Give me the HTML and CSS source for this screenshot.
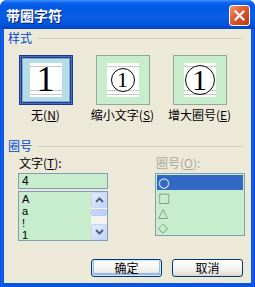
FILE: index.html
```html
<!DOCTYPE html>
<html lang="zh-CN">
<head>
    <meta charset="UTF-8">
    <title>带圈字符</title>
    <link rel="stylesheet" href="styles.css">
</head>
<body>

<div class="window">
    <div class="titlebar">
        <span class="title">带圈字符</span>
        <button class="close">
            <svg width="11" height="11" viewBox="0 0 11 11"><path d="M1.5 1.5 L9.5 9.5 M9.5 1.5 L1.5 9.5" stroke="#fff" stroke-width="2.2" stroke-linecap="square"/></svg>
        </button>
    </div>

    <div class="client">
        <div class="group-head">
            <span class="group-name">样式</span>
            <span class="group-line"></span>
        </div>

        <div class="styles">
            <div class="style-opt">
                <div class="preview selected">
                    <div class="paper"><span class="char-plain">1</span></div>
                </div>
                <div class="opt-label">无(<u>N</u>)</div>
            </div>
            <div class="style-opt">
                <div class="preview">
                    <div class="paper"><span class="ring ring-small">1</span></div>
                </div>
                <div class="opt-label">缩小文字(<u>S</u>)</div>
            </div>
            <div class="style-opt">
                <div class="preview">
                    <div class="paper"><span class="ring ring-big">1</span></div>
                </div>
                <div class="opt-label">增大圈号(<u>E</u>)</div>
            </div>
        </div>

        <div class="group-head second">
            <span class="group-name">圈号</span>
            <span class="group-line"></span>
        </div>

        <div class="fields">
            <div class="field">
                <div class="field-label">文字(<u>T</u>):</div>
                <div class="text-input">4</div>
                <div class="list text-list">
                    <div class="list-items">
                        <div class="item">A</div>
                        <div class="item">a</div>
                        <div class="item">!</div>
                        <div class="item">1</div>
                    </div>
                    <div class="scrollbar">
                        <div class="sb-btn">
                            <svg width="9" height="6" viewBox="0 0 9 6"><path d="M1 5 L4.5 1.5 L8 5" fill="none" stroke="#4d6185" stroke-width="2"/></svg>
                        </div>
                        <div class="sb-track"><div class="sb-thumb"></div></div>
                        <div class="sb-btn">
                            <svg width="9" height="6" viewBox="0 0 9 6"><path d="M1 1 L4.5 4.5 L8 1" fill="none" stroke="#4d6185" stroke-width="2"/></svg>
                        </div>
                    </div>
                </div>
            </div>

            <div class="field ring-field">
                <div class="field-label disabled">圈号(<u>O</u>):</div>
                <div class="list ring-list">
                    <div class="ring-item selected">○</div>
                    <div class="ring-item">□</div>
                    <div class="ring-item">△</div>
                    <div class="ring-item">◇</div>
                </div>
            </div>
        </div>

        <div class="buttons">
            <button class="btn default">确定</button>
            <button class="btn">取消</button>
        </div>
    </div>
</div>

</body>
</html>
```

FILE: styles.css
```css
body {
    margin: 0;
    padding: 0;
    font-family: "Noto Sans CJK SC", "Noto Sans", sans-serif;
    font-size: 12px;
    color: #000;
    background-color: #fff;
}

.window {
    width: 255px;
    height: 287px;
    display: flex;
    flex-direction: column;
    background: linear-gradient(to right, #0831d9 0, #166aee 1px, #0855dd 3px, #0855dd 252px, #166aee 253px, #0831d9 255px);
    border-radius: 7px 7px 0 0;
    overflow: hidden;
}

.titlebar {
    height: 29px;
    flex-shrink: 0;
    display: flex;
    align-items: center;
    justify-content: space-between;
    padding: 0 5px 0 6px;
    background: linear-gradient(#3d8fff 0, #0b61ec 3px, #0058e6 7px, #0a5fe0 16px, #0055db 24px, #0044c8 29px);
}

.title {
    color: #fff;
    font-weight: bold;
    font-size: 14px;
    text-shadow: 1px 1px 0 #0a1e7c;
    margin-top: 1px;
}

.close {
    width: 21px;
    height: 21px;
    padding: 0;
    margin-top: 2px;
    border: 1px solid #fff;
    border-radius: 3px;
    background: linear-gradient(135deg, #f09a78 0, #e3643c 35%, #cf4620 70%, #b83a1a 100%);
    display: flex;
    align-items: center;
    justify-content: center;
}

.client {
    flex: 1;
    margin: 0 4px 4px 4px;
    padding: 2px 8px 0 4px;
    background-color: #ece9d8;
}

.group-head {
    display: flex;
    align-items: center;
    height: 14px;
    gap: 6px;
}

.group-head.second {
    margin-top: 17px;
}

.group-name {
    color: #0046d5;
    line-height: 14px;
}

.group-line {
    flex: 1;
    height: 1px;
    background-color: #d0d0bf;
    margin-top: 1px;
}

.styles {
    display: flex;
    margin-top: 10px;
    margin-left: -1px;
}

.style-opt {
    width: 77px;
    display: flex;
    flex-direction: column;
    align-items: center;
}

.preview {
    width: 54px;
    height: 50px;
    box-sizing: border-box;
    border: 1px solid #93a89a;
    background-color: #c7edcc;
    display: flex;
    align-items: center;
    justify-content: center;
}

.preview.selected {
    border: 1px solid #1a3a8a;
    background-color: #b6dde6;
    box-shadow: inset 0 0 0 1px #4f6fb8, inset 0 0 0 2px #1a3a8a, inset 0 0 0 3px #7fa8d6;
}

.paper {
    width: 32px;
    height: 34px;
    background-color: #fff;
    background-image:
        linear-gradient(#c8c8c8, #c8c8c8),
        linear-gradient(#c8c8c8, #c8c8c8),
        linear-gradient(#c8c8c8, #c8c8c8);
    background-size: 100% 1px;
    background-repeat: no-repeat;
    background-position: 0 3px, 0 27px, 0 31px;
    display: flex;
    align-items: center;
    justify-content: center;
}

.char-plain {
    font-family: "Liberation Serif", serif;
    font-size: 36px;
    line-height: 34px;
    margin-top: -2px;
}

.ring {
    box-sizing: border-box;
    border: 1px solid #000;
    border-radius: 50%;
    display: flex;
    align-items: center;
    justify-content: center;
    font-family: "Liberation Serif", serif;
    background-color: #fff;
}

.ring-small {
    width: 24px;
    height: 24px;
    font-size: 22px;
    line-height: 22px;
}

.ring-big {
    width: 30px;
    height: 30px;
    font-size: 30px;
    line-height: 28px;
}

.opt-label {
    margin-top: 3px;
    line-height: 14px;
    white-space: nowrap;
}

.fields {
    display: flex;
    gap: 47px;
    margin: 3px -2px 0 10px;
}

.field {
    width: 90px;
    display: flex;
    flex-direction: column;
}

.field-label {
    line-height: 14px;
    padding-left: 1px;
    margin-bottom: 3px;
}

.field-label.disabled {
    color: #aca899;
}

.text-input {
    height: 16px;
    box-sizing: border-box;
    border: 1px solid #7f9db9;
    background-color: #c7edcc;
    padding-left: 3px;
    font-family: "Liberation Sans", sans-serif;
    line-height: 14px;
    margin-bottom: 2px;
}

.list {
    box-sizing: border-box;
    border: 1px solid #7f9db9;
    background-color: #c7edcc;
}

.text-list {
    height: 50px;
    display: flex;
}

.list-items {
    flex: 1;
    padding: 1px 0 0 3px;
}

.item {
    height: 12px;
    font-family: "Liberation Sans", sans-serif;
    font-size: 11px;
    line-height: 12px;
}

.scrollbar {
    width: 16px;
    display: flex;
    flex-direction: column;
    background-color: #f3f3ef;
}

.sb-btn {
    height: 16px;
    box-sizing: border-box;
    border: 1px solid #c3d3fd;
    border-radius: 2px;
    background: linear-gradient(135deg, #e6eefc, #c1d3fb);
    display: flex;
    align-items: center;
    justify-content: center;
}

.sb-track {
    flex: 1;
    padding-top: 1px;
}

.sb-thumb {
    height: 7px;
    box-sizing: border-box;
    border: 1px solid #b7cbf7;
    border-radius: 2px;
    background: linear-gradient(to right, #c8d6fb, #b9cdf9);
}

.ring-list {
    height: 63px;
    padding: 1px;
}

.ring-item {
    height: 15px;
    line-height: 15px;
    padding-left: 1px;
    font-family: "DejaVu Sans", sans-serif;
    font-size: 13px;
    color: #7d8d7d;
}

.ring-item.selected {
    background-color: #316ac5;
    color: #fff;
}

.buttons {
    display: flex;
    justify-content: flex-end;
    gap: 10px;
    margin-top: 18px;
}

.btn {
    width: 71px;
    height: 18px;
    padding: 0;
    font-family: "Noto Sans CJK SC", sans-serif;
    font-size: 12px;
    line-height: 16px;
    border: 1px solid #003c74;
    border-radius: 3px;
    background: linear-gradient(#ffffff, #f3f2ee 60%, #e3e0d8 90%, #d6d0c5);
    color: #000;
}

.btn.default {
    box-shadow: inset 0 0 0 1px #cee7ff, inset 0 -1px 0 2px #98b8ea;
}
```
